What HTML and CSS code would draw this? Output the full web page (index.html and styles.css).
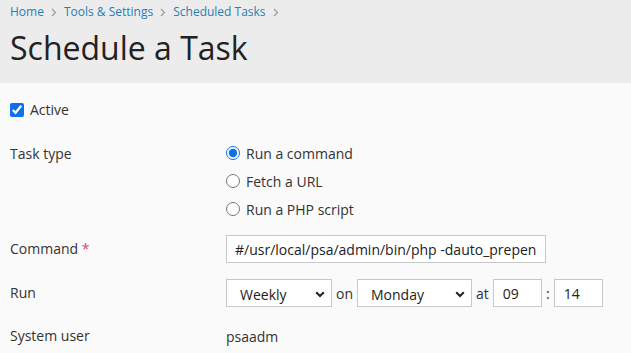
FILE: index.html
```html
<!DOCTYPE html>
<html>
<head>
<meta charset="utf-8">
<link rel="stylesheet" href="styles.css">
</head>
<body>
<header class="page-header">
  <nav class="breadcrumbs">
    <a href="#">Home</a><span class="sep"><svg width="6" height="9" viewBox="0 0 6 9"><path d="M1 1l3.5 3.5L1 8" fill="none" stroke="#9a9a9a" stroke-width="1.2"/></svg></span>
    <a href="#">Tools &amp; Settings</a><span class="sep"><svg width="6" height="9" viewBox="0 0 6 9"><path d="M1 1l3.5 3.5L1 8" fill="none" stroke="#9a9a9a" stroke-width="1.2"/></svg></span>
    <a href="#">Scheduled Tasks</a><span class="sep"><svg width="6" height="9" viewBox="0 0 6 9"><path d="M1 1l3.5 3.5L1 8" fill="none" stroke="#9a9a9a" stroke-width="1.2"/></svg></span>
  </nav>
  <h1 class="title">Schedule a Task</h1>
</header>
<main class="form">
  <div class="row row-active">
    <label class="check"><input type="checkbox" checked> Active</label>
  </div>
  <div class="row row-type">
    <div class="label">Task type</div>
    <div class="radios">
      <label class="radio"><input type="radio" name="t" checked> Run a command</label>
      <label class="radio"><input type="radio" name="t"> Fetch a URL</label>
      <label class="radio"><input type="radio" name="t"> Run a PHP script</label>
    </div>
  </div>
  <div class="row row-cmd">
    <div class="label">Command <span class="req">*</span></div>
    <div class="field"><input class="text cmd" type="text" value="#/usr/local/psa/admin/bin/php -dauto_prepend_file=sdk.php '/opt/psa/admin/plib/modules/task.php'"></div>
  </div>
  <div class="row row-run">
    <div class="label">Run</div>
    <div class="field inline">
      <div class="select sel-period"><span>Weekly</span><svg width="10" height="7" viewBox="0 0 10 7"><path d="M1.2 1.2L5 5l3.8-3.8" fill="none" stroke="#222" stroke-width="2"/></svg></div>
      <span class="word">on</span>
      <div class="select sel-day"><span>Monday</span><svg width="10" height="7" viewBox="0 0 10 7"><path d="M1.2 1.2L5 5l3.8-3.8" fill="none" stroke="#222" stroke-width="2"/></svg></div>
      <span class="word">at</span>
      <div class="text time">09</div>
      <span class="colon">:</span>
      <div class="text time">14</div>
    </div>
  </div>
  <div class="row row-user">
    <div class="label">System user</div>
    <div class="field">psaadm</div>
  </div>
</main>
</body>
</html>
```

FILE: styles.css
```css
* { box-sizing: border-box; }
html, body { margin: 0; padding: 0; }
body {
  background: #fafafa;
  font-family: "Open Sans", "Liberation Sans", sans-serif;
  font-size: 14px;
  color: #333;
  width: 631px;
  height: 353px;
  overflow: hidden;
}
.page-header {
  background: #ececec;
  height: 83px;
  padding: 3px 10px 0;
}
.breadcrumbs {
  font-size: 12px;
  line-height: 17px;
  display: flex;
  align-items: center;
}
.breadcrumbs a {
  color: #1e7fb6;
  text-decoration: none;
}
.sep {
  display: inline-flex;
  align-items: center;
  width: 20px;
  justify-content: center;
  padding-top: 1px;
}
.title {
  margin: 6px 0 0;
  font-size: 32px;
  font-weight: 400;
  line-height: 44px;
  color: #222;
}
.form { padding: 0 10px; }
.row {
  display: grid;
  grid-template-columns: 216px 1fr;
  align-items: center;
}
.label { line-height: 20px; }
.req { color: #d9477a; }
.row-active { display: block; margin-top: 17px; height: 20px; }
.check { display: flex; align-items: center; line-height: 20px; }
.check input { margin: 0 6px 0 0; width: 14px; height: 14px; accent-color: #0b6ff0; }
.row-type { margin-top: 19px; align-items: start; }
.row-type .label { margin-top: 5px; }
.radios { display: flex; flex-direction: column; }
.radio { display: flex; align-items: center; height: 28px; }
.radio input { margin: 0 6px 0 0; width: 14px; height: 14px; accent-color: #0b6ff0; }
.row-cmd { margin-top: 12px; }
.text {
  background: #fff;
  border: 1px solid #c8c8c8;
  height: 28px;
}
.cmd {
  width: 320px;
  padding: 0 8px;
  font-family: "Open Sans", "Liberation Sans", sans-serif;
  font-size: 14px;
  color: #222;
  outline: none;
}
.row-run { margin-top: 16px; }
.inline { display: flex; align-items: center; }
.select {
  background: #fff;
  border: 1px solid #c8c8c8;
  height: 28px;
  display: flex;
  align-items: center;
  justify-content: space-between;
  padding: 2px 6px 0 13px;
  color: #222;
}
.sel-period { width: 106px; }
.sel-day { width: 115px; }
.word { padding: 0 4px; color: #333; }
.time {
  width: 49px;
  padding: 0 9px;
  display: flex;
  align-items: center;
  color: #222;
}
.colon { width: 12px; text-align: center; color: #333; }
.row-user { margin-top: 16px; height: 26px; }
```
